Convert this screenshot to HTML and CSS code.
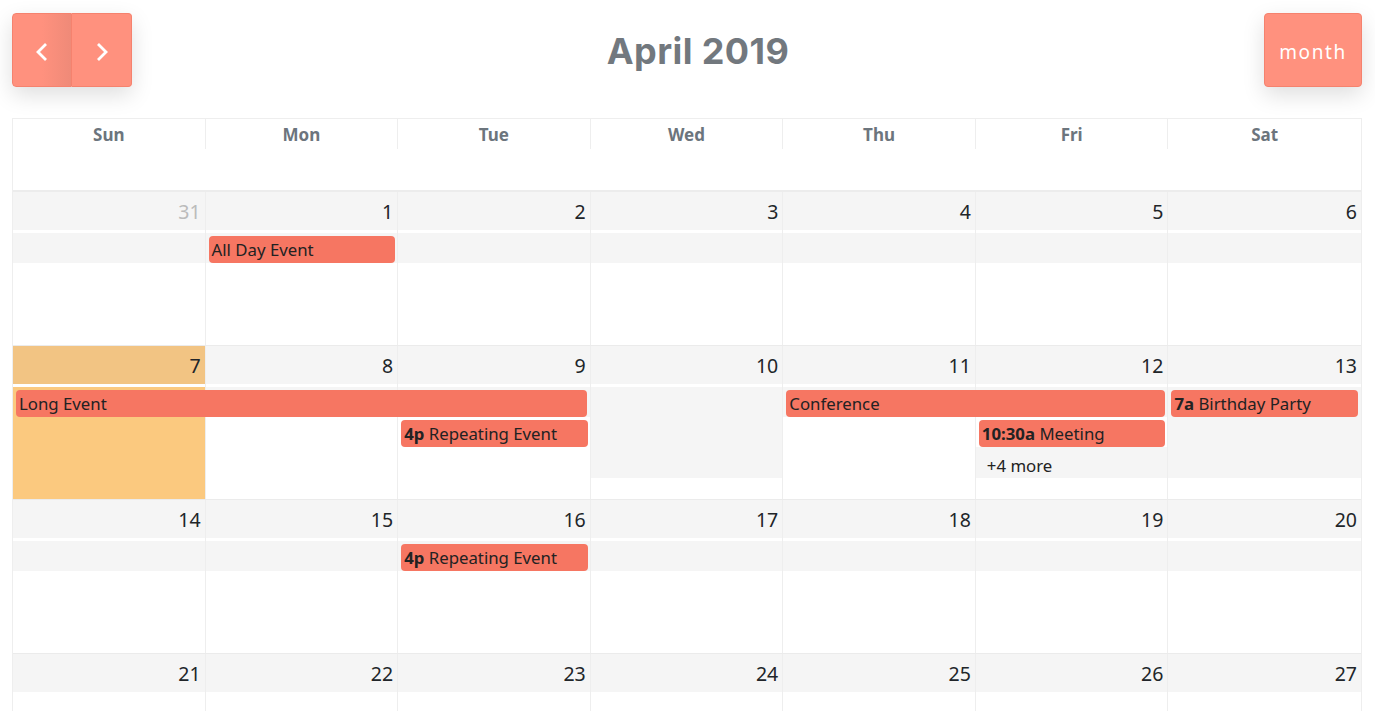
FILE: index.html
```html
<!DOCTYPE html>
<html>
<head>
<meta charset="utf-8">
<link rel="stylesheet" href="styles.css">
</head>
<body>
<div class="page">
  <div class="toolbar">
    <div class="nav">
      <div class="btn prev"><svg width="12" height="20" viewBox="0 0 12 20"><polyline points="10,2 2,10 10,18" fill="none" stroke="#fff" stroke-width="2.8" stroke-linejoin="miter"/></svg></div>
      <div class="btn next"><svg width="12" height="20" viewBox="0 0 12 20"><polyline points="2,2 10,10 2,18" fill="none" stroke="#fff" stroke-width="2.8" stroke-linejoin="miter"/></svg></div>
    </div>
    <h2 class="title">April 2019</h2>
    <div class="btn month">month</div>
  </div>

  <div class="cal">
    <div class="dow">
      <div>Sun</div><div>Mon</div><div>Tue</div><div>Wed</div><div>Thu</div><div>Fri</div><div>Sat</div>
    </div>
    <div class="spacer"></div>

    <!-- week 1 -->
    <div class="week w1 first">
      <div class="col c1"></div><div class="col c2"></div><div class="col c3"></div><div class="col c4"></div><div class="col c5"></div><div class="col c6"></div><div class="col c7"></div>
      <div class="num c1 other">31</div><div class="num c2">1</div><div class="num c3">2</div><div class="num c4">3</div><div class="num c5">4</div><div class="num c6">5</div><div class="num c7">6</div>
      <div class="bg r2 c1"></div><div class="bg r2 c2"></div><div class="bg r2 c3"></div><div class="bg r2 c4"></div><div class="bg r2 c5"></div><div class="bg r2 c6"></div><div class="bg r2 c7"></div>
      <div class="ev r2 c2">All Day Event</div>
    </div>

    <!-- week 2 -->
    <div class="week w2">
      <div class="col c1 today"></div><div class="col c2"></div><div class="col c3"></div><div class="col c4"></div><div class="col c5"></div><div class="col c6"></div><div class="col c7"></div>
      <div class="num c1 today">7</div><div class="num c2">8</div><div class="num c3">9</div><div class="num c4">10</div><div class="num c5">11</div><div class="num c6">12</div><div class="num c7">13</div>
      <div class="bg r2 c2"></div><div class="bg r2 c3"></div><div class="bg r2-5 c4"></div><div class="bg r2 c5"></div><div class="bg r2 c6"></div><div class="bg r2-5 c7"></div>
      <div class="bg r4 c6"></div>
      <div class="ev r2 s1-4">Long Event</div>
      <div class="ev r2 s5-7">Conference</div>
      <div class="ev r2 c7"><b>7a</b> Birthday Party</div>
      <div class="ev r3 c3"><b>4p</b> Repeating Event</div>
      <div class="ev r3 c6"><b>10:30a</b> Meeting</div>
      <div class="more r4 c6">+4 more</div>
    </div>

    <!-- week 3 -->
    <div class="week w1">
      <div class="col c1"></div><div class="col c2"></div><div class="col c3"></div><div class="col c4"></div><div class="col c5"></div><div class="col c6"></div><div class="col c7"></div>
      <div class="num c1">14</div><div class="num c2">15</div><div class="num c3">16</div><div class="num c4">17</div><div class="num c5">18</div><div class="num c6">19</div><div class="num c7">20</div>
      <div class="bg r2 c1"></div><div class="bg r2 c2"></div><div class="bg r2 c3"></div><div class="bg r2 c4"></div><div class="bg r2 c5"></div><div class="bg r2 c6"></div><div class="bg r2 c7"></div>
      <div class="ev r2 c3"><b>4p</b> Repeating Event</div>
    </div>

    <!-- week 4 -->
    <div class="week w4">
      <div class="col c1"></div><div class="col c2"></div><div class="col c3"></div><div class="col c4"></div><div class="col c5"></div><div class="col c6"></div><div class="col c7"></div>
      <div class="num c1">21</div><div class="num c2">22</div><div class="num c3">23</div><div class="num c4">24</div><div class="num c5">25</div><div class="num c6">26</div><div class="num c7">27</div>
    </div>
  </div>
</div>
</body>
</html>
```

FILE: styles.css
```css
* { box-sizing: border-box; }
body {
  margin: 0;
  background: #fff;
  font-family: "Noto Sans", "Open Sans", sans-serif;
  color: #212529;
}
.page { padding: 13px 13px 0 12px; }

.toolbar {
  display: flex;
  justify-content: space-between;
  align-items: center;
  height: 74px;
  margin-bottom: 31px;
}
.nav {
  display: flex;
  border-radius: 4px;
  box-shadow: 0 8px 22px rgba(0, 0, 0, 0.13);
}
.btn {
  height: 74px;
  padding-top: 3px;
  background: #ff917e;
  border: 1px solid #f5826e;
  color: #fff;
  display: flex;
  align-items: center;
  justify-content: center;
}
.prev {
  width: 60px;
  border-radius: 4px 0 0 4px;
  background: linear-gradient(to right, #ff917e 50%, #ef8a78);
}
.next {
  width: 60px;
  border-left: 0;
  border-radius: 0 4px 4px 0;
}
.month {
  width: 98px;
  border-radius: 4px;
  font-size: 19px;
  letter-spacing: 1.6px;
  box-shadow: 0 8px 22px rgba(0, 0, 0, 0.13);
}
.title {
  margin: 2px 0 0;
  font-family: Inter, "Noto Sans", sans-serif;
  font-weight: 700;
  font-size: 36px;
  letter-spacing: 0.4px;
  color: #72787e;
}

.cal {
  border: 1px solid #eee;
  border-bottom: 0;
}
.dow {
  display: grid;
  grid-template-columns: repeat(7, 1fr);
}
.dow div {
  height: 30px;
  padding-top: 1px;
  border-right: 1px solid #eee;
  text-align: center;
  font-weight: 700;
  font-size: 17px;
  line-height: 30px;
  color: #6c757d;
}
.dow div:last-child { border-right: 0; }
.spacer { height: 41px; }

.week {
  display: grid;
  grid-template-columns: repeat(7, 1fr);
  height: 154px;
  border-top: 1px solid #ebebeb;
}
.week.first {
  height: 155px;
  border-top: 2px solid #ececec;
}
.w1 { grid-template-rows: 41px 30px 1fr; }
.w2 { grid-template-rows: 41px 30px 30px 31px 1fr; }
.w4 { grid-template-rows: 41px 1fr; }

.c1 { grid-column: 1; }
.c2 { grid-column: 2; }
.c3 { grid-column: 3; }
.c4 { grid-column: 4; }
.c5 { grid-column: 5; }
.c6 { grid-column: 6; }
.c7 { grid-column: 7; }
.s1-4 { grid-column: 1 / 4; }
.s5-7 { grid-column: 5 / 7; }
.r2 { grid-row: 2; }
.r3 { grid-row: 3; }
.r4 { grid-row: 4; }
.r2-5 { grid-row: 2 / 5; }

.col {
  grid-row: 1 / -1;
  border-right: 1px solid #eee;
}
.col.c7 { border-right: 0; }
.col.today { background: #fbc97f; }

.num {
  grid-row: 1;
  background: #f5f5f5;
  border-bottom: 3px solid #fff;
  margin-right: 1px;
  text-align: right;
  padding: 2px 4px 0;
  font-size: 19.5px;
  line-height: 36px;
}
.num.c7 { margin-right: 0; }
.num.today { background: #f2c483; }
.num.other { color: #bbb; }

.bg {
  background: #f5f5f5;
  margin-right: 1px;
}
.bg.c7 { margin-right: 0; }

.ev {
  align-self: start;
  margin: 3px 3px 0 3px;
  height: 27px;
  background: #f67662;
  border-radius: 4px;
  padding: 1px 3px 0;
  font-size: 16.8px;
  line-height: 26px;
  white-space: nowrap;
  overflow: hidden;
  color: #222;
}
.ev.s1-4 { margin-right: 4px; }
.ev b { font-weight: 700; }

.more {
  padding: 4px 0 0 11px;
  font-size: 16.8px;
  line-height: 30px;
  color: #222;
}
```
